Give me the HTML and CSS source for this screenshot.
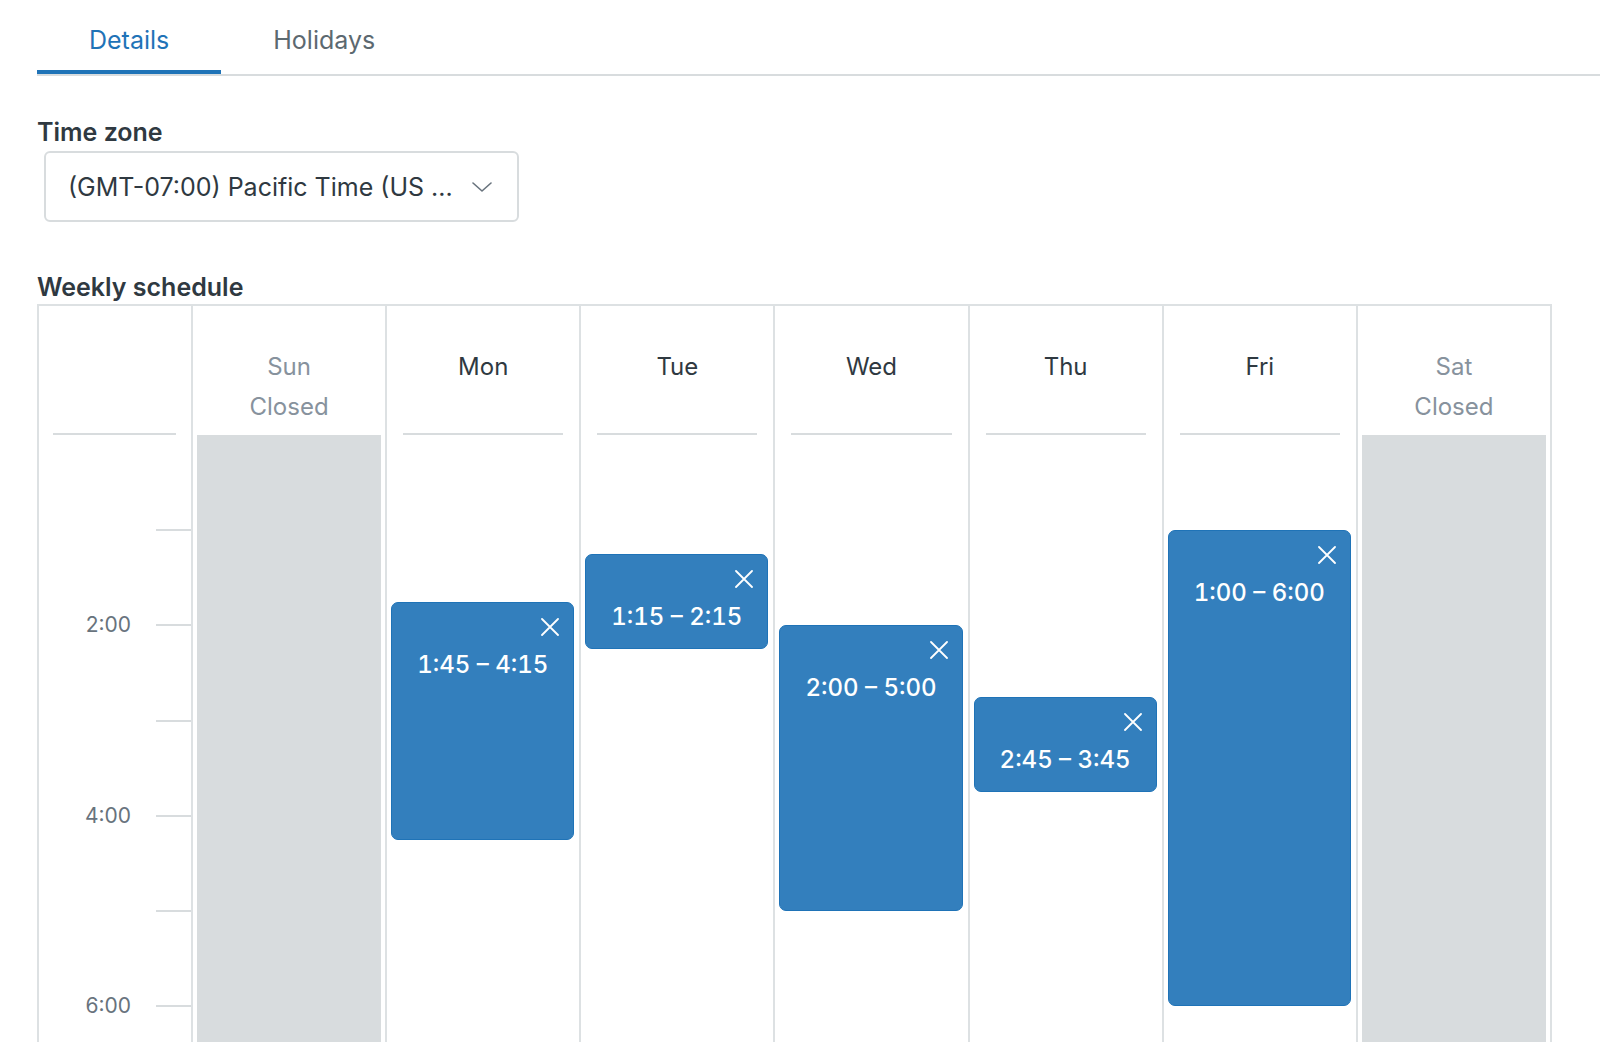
FILE: index.html
```html
<!DOCTYPE html>
<html lang="en">
<head>
<meta charset="utf-8">
<title>Schedule details</title>
<link rel="stylesheet" href="styles.css">
</head>
<body>
<div class="page">
  <nav class="tabs">
    <div class="tab tab-active">Details</div>
    <div class="tab">Holidays</div>
  </nav>

  <div class="field-label tz-label">Time zone</div>
  <div class="select">
    <span class="select-text">(GMT-07:00) Pacific Time (US ...</span>
    <svg class="chevron" width="20" height="10" viewBox="0 0 20 10"><path d="M1 1 L10 9 L19 1" fill="none" stroke="#68737d" stroke-width="1.6" stroke-linecap="round" stroke-linejoin="round"/></svg>
  </div>

  <div class="field-label ws-label">Weekly schedule</div>
  <div class="schedule">
    <div class="col time-col">
      <div class="head"></div>
      <div class="time-body">
        <div class="hour first"></div>
        <div class="hour"><span class="tick"></span></div>
        <div class="hour"><span class="hour-label">2:00</span><span class="tick"></span></div>
        <div class="hour"><span class="tick"></span></div>
        <div class="hour"><span class="hour-label">4:00</span><span class="tick"></span></div>
        <div class="hour"><span class="tick"></span></div>
        <div class="hour"><span class="hour-label">6:00</span><span class="tick"></span></div>
        <div class="hour"><span class="tick"></span></div>
      </div>
    </div>

    <div class="col day closed">
      <div class="head"><div class="day-name">Sun</div><div class="day-sub">Closed</div></div>
      <div class="day-body"></div>
    </div>

    <div class="col day">
      <div class="head"><div class="day-name">Mon</div></div>
      <div class="day-body">
        <div class="event" style="top: 166.67px; height: 238.1px;">
          <svg class="event-close" width="18" height="18" viewBox="0 0 18 18"><path d="M1 1 L17 17 M17 1 L1 17" stroke="#fff" stroke-width="1.8" stroke-linecap="round"/></svg>
          <div class="event-time">1:45 – 4:15</div>
        </div>
      </div>
    </div>

    <div class="col day">
      <div class="head"><div class="day-name">Tue</div></div>
      <div class="day-body">
        <div class="event" style="top: 119.05px; height: 95.24px;">
          <svg class="event-close" width="18" height="18" viewBox="0 0 18 18"><path d="M1 1 L17 17 M17 1 L1 17" stroke="#fff" stroke-width="1.8" stroke-linecap="round"/></svg>
          <div class="event-time">1:15 – 2:15</div>
        </div>
      </div>
    </div>

    <div class="col day">
      <div class="head"><div class="day-name">Wed</div></div>
      <div class="day-body">
        <div class="event" style="top: 190.48px; height: 285.72px;">
          <svg class="event-close" width="18" height="18" viewBox="0 0 18 18"><path d="M1 1 L17 17 M17 1 L1 17" stroke="#fff" stroke-width="1.8" stroke-linecap="round"/></svg>
          <div class="event-time">2:00 – 5:00</div>
        </div>
      </div>
    </div>

    <div class="col day">
      <div class="head"><div class="day-name">Thu</div></div>
      <div class="day-body">
        <div class="event" style="top: 261.91px; height: 95.24px;">
          <svg class="event-close" width="18" height="18" viewBox="0 0 18 18"><path d="M1 1 L17 17 M17 1 L1 17" stroke="#fff" stroke-width="1.8" stroke-linecap="round"/></svg>
          <div class="event-time">2:45 – 3:45</div>
        </div>
      </div>
    </div>

    <div class="col day">
      <div class="head"><div class="day-name">Fri</div></div>
      <div class="day-body">
        <div class="event" style="top: 95.24px; height: 476.2px;">
          <svg class="event-close" width="18" height="18" viewBox="0 0 18 18"><path d="M1 1 L17 17 M17 1 L1 17" stroke="#fff" stroke-width="1.8" stroke-linecap="round"/></svg>
          <div class="event-time">1:00 – 6:00</div>
        </div>
      </div>
    </div>

    <div class="col day closed">
      <div class="head"><div class="day-name">Sat</div><div class="day-sub">Closed</div></div>
      <div class="day-body"></div>
    </div>
  </div>
</div>
</body>
</html>
```

FILE: styles.css
```css
html, body {
  margin: 0;
  padding: 0;
  height: 100%;
  overflow: hidden;
  background: #fff;
}

body {
  font-family: Inter, "Noto Sans", "Liberation Sans", sans-serif;
  color: #2f3941;
}

.page {
  padding-left: 37px;
}

/* Tabs */
.tabs {
  display: flex;
  border-bottom: 2px solid #d8dcde;
}

.tab {
  position: relative;
  padding: 25px 52px 19px;
  font-size: 25px;
  line-height: 30px;
  color: #5c6970;
}

.tab-active {
  color: #1f73b7;
}

.tab-active::after {
  content: "";
  position: absolute;
  left: 0;
  right: 0;
  bottom: 0;
  height: 4px;
  background: #1f73b7;
}

/* Form labels */
.field-label {
  font-size: 25px;
  line-height: 30px;
  font-weight: 600;
  color: #2f3941;
}

.tz-label {
  margin-top: 41px;
}

.select {
  margin: 4px 0 0 7px;
  width: 475px;
  height: 71px;
  box-sizing: border-box;
  border: 2px solid #d8dcde;
  border-radius: 6px;
  display: flex;
  align-items: center;
  justify-content: space-between;
  padding: 0 25px 0 22px;
}

.select-text {
  font-size: 25px;
  line-height: 30px;
  color: #2f3941;
}

.chevron {
  display: block;
}

.ws-label {
  margin-top: 50px;
}

/* Schedule grid */
.schedule {
  margin-top: 2px;
  width: 1515px;
  box-sizing: border-box;
  border: 2px solid #dde1e3;
  border-bottom: none;
  display: grid;
  grid-template-columns: 152px repeat(7, 1fr);
  height: 800px;
}

.col {
  display: flex;
  flex-direction: column;
  min-width: 0;
}

.day {
  border-left: 2px solid #dde1e3;
  padding: 0 4px;
}

.head {
  height: 129px;
  box-sizing: border-box;
  padding-top: 41px;
  border-bottom: 2px solid #d8dcde;
  text-align: center;
  font-size: 24px;
  line-height: 40px;
}

.day .head {
  margin: 0 12px;
}

.time-col .head {
  margin: 0 15px 0 14px;
}

.closed .head {
  border-bottom-color: transparent;
}

.day-name {
  color: #2f3941;
}

.closed .day-name,
.day-sub {
  color: #87929d;
}

.day-body {
  position: relative;
  flex: 1;
}

.closed .day-body {
  background: #d8dcde;
}

/* Time column */
.time-body {
  flex: 1;
}

.hour {
  height: 95.24px;
  display: flex;
  justify-content: flex-end;
  align-items: flex-start;
}

.tick {
  width: 35px;
  border-top: 2px solid #d8dcde;
  margin-top: -1px;
}

.hour-label {
  font-size: 21px;
  line-height: 24px;
  margin-top: -12px;
  margin-right: 25px;
  color: #68737d;
}

/* Events */
.event {
  position: absolute;
  left: 0;
  right: 1px;
  box-sizing: border-box;
  background: #337fbd;
  border: 1px solid #1f73b7;
  border-radius: 7px;
  color: #fff;
}

.event-close {
  display: block;
  margin: 15px 14px 0 auto;
}

.event-time {
  margin-top: 14px;
  text-align: center;
  font-size: 24px;
  line-height: 30px;
  font-weight: 500;
  font-variant-numeric: tabular-nums;
}
```
